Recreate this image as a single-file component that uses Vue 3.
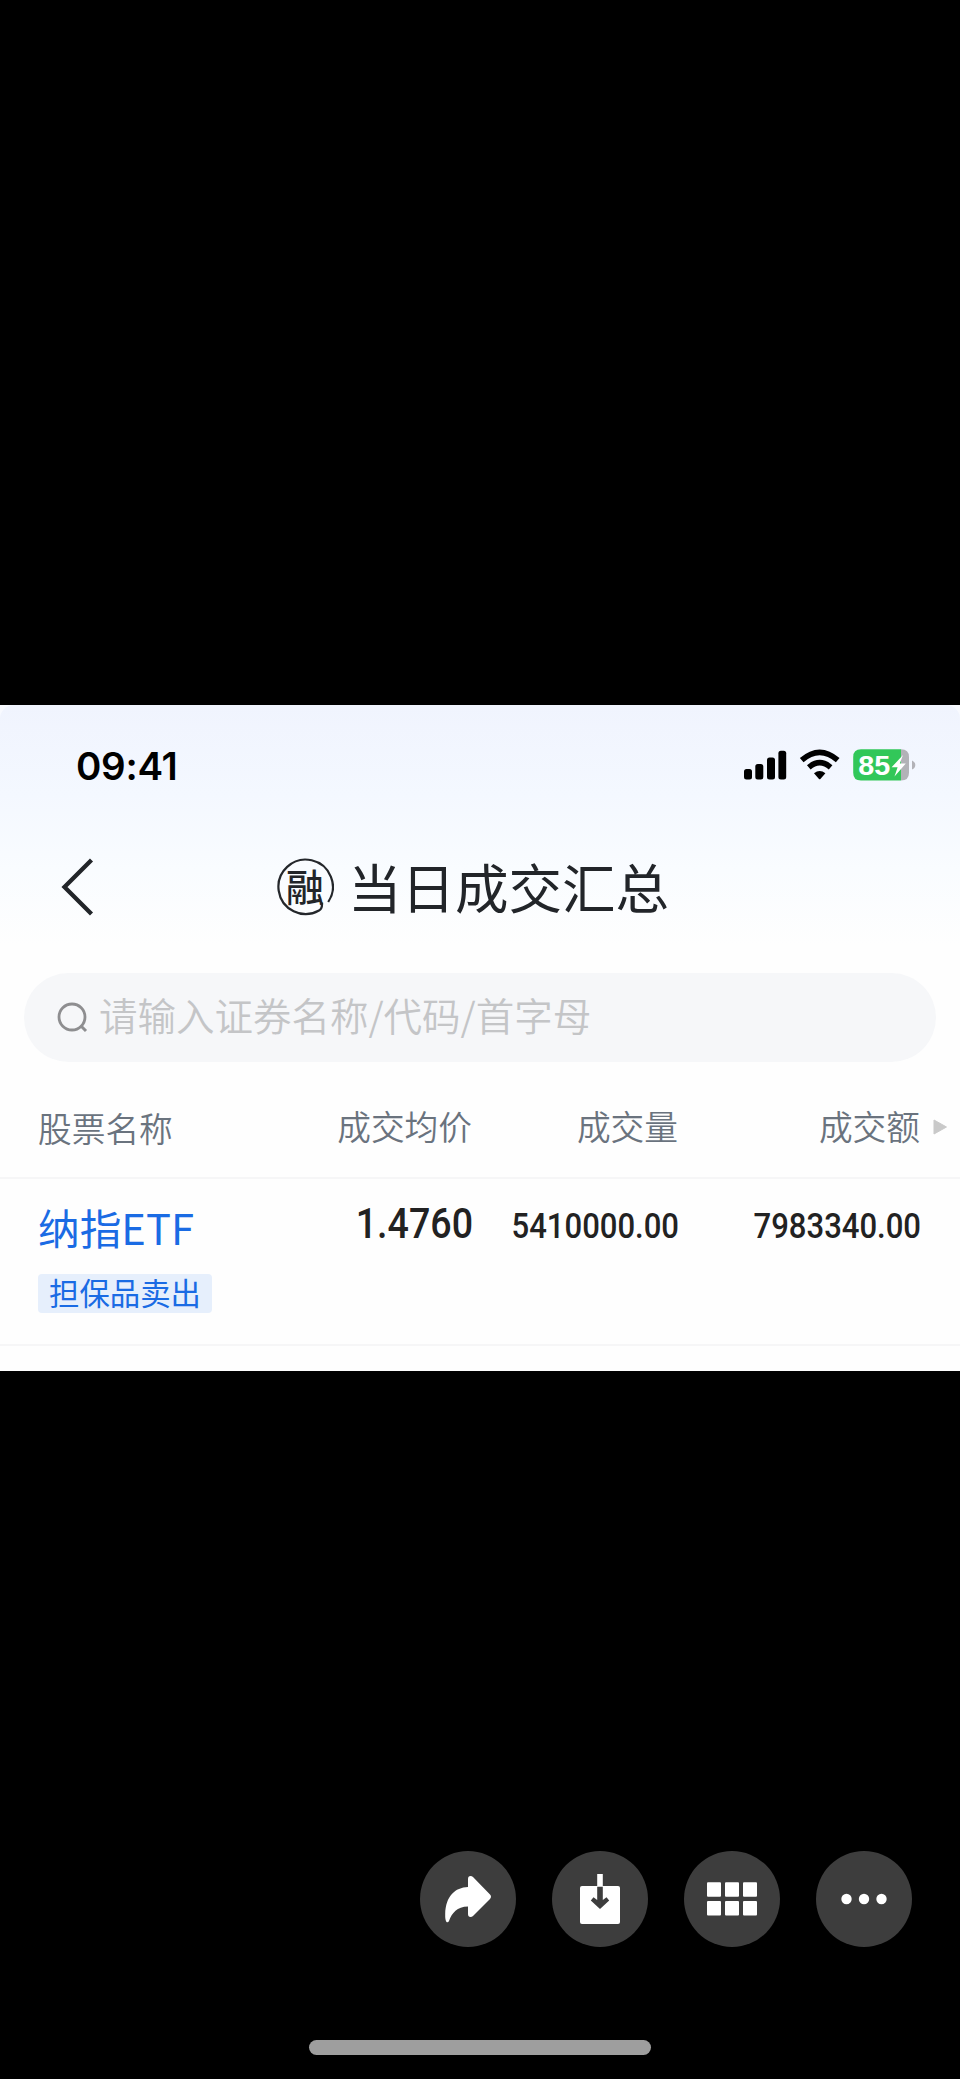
<script setup>
const columns = [
  { key: 'price', label: '成交均价' },
  { key: 'volume', label: '成交量' },
  { key: 'amount', label: '成交额' },
]
const row = {
  name: '纳指ETF',
  tag: '担保品卖出',
  price: '1.4760',
  volume: '5410000.00',
  amount: '7983340.00',
}
</script>

<template>
  <div class="viewer">
    <main class="shot">
      <div class="top">
        <div class="status">
          <span class="time">09:41</span>
          <svg class="status-icons" width="180" height="40" viewBox="20 15 180 40">
            <rect x="24" y="39" width="8" height="10.5" rx="2.5" />
            <rect x="35.3" y="34" width="8" height="15.5" rx="2.5" />
            <rect x="47" y="27.6" width="8" height="21.9" rx="2.5" />
            <rect x="58.4" y="20.8" width="7.8" height="28.7" rx="2.5" />
            <g fill="none" stroke="#000" stroke-width="5.6">
              <path d="M81.7 30.2 Q99.7 14.6 117.7 30.2" />
              <path d="M88.8 37.3 Q99.7 28.1 110.6 37.3" />
            </g>
            <path d="M94 43.3 Q99.7 38.6 105.4 43.3 L100.4 48.9 Q99.7 49.6 99 48.9Z" />
            <path d="M141 19.3H181V50.5H141Q133.2 50.5 133.2 42.7V27.1Q133.2 19.3 141 19.3Z" fill="#32c759" />
            <path d="M181 19.3Q189 19.3 189 27.1V42.7Q189 50.5 181 50.5Z" fill="#b2b2b7" />
            <path d="M192 30.5Q195.3 32 195.3 35T192 39.5Z" fill="#b2b2b7" />
            <text x="138.2" y="45.2" class="level" textLength="32" lengthAdjust="spacingAndGlyphs">85</text>
            <path d="M183 25L171.600 37.300H177.600L174.500 46.500L185.800 33.600H179.800Z" fill="#fff" />
          </svg>
        </div>
        <header class="nav">
          <svg class="back" width="36" height="64" viewBox="0 0 36 64">
            <path d="M31.5 5L4.5 32L31.5 59" fill="none" stroke="#222529" stroke-width="4.3" />
          </svg>
          <h1 class="title">
            <span class="seal">
              <svg width="58" height="58" viewBox="0 0 58 58">
                <path
                  d="M52.2 44A27.2 27.2 0 1 0 43 52.5Q46.500 50.500 46 44.500"
                  fill="none" stroke="#24272b" stroke-width="2.200"
                />
              </svg>
              <span class="seal-char">融</span>
            </span>
            <span class="title-text">当日成交汇总</span>
          </h1>
        </header>
      </div>

      <div class="search">
        <svg width="32" height="32" viewBox="0 0 32 32" fill="none" stroke="#8e8e90" stroke-width="2.8">
          <circle cx="15" cy="15" r="13" />
          <path d="M23.500 23.500L29 29" stroke-width="3" />
        </svg>
        <span class="placeholder">请输入证券名称/代码/首字母</span>
      </div>

      <div class="grid head">
        <span class="stock">股票名称</span>
        <span v-for="c in columns" :key="c.key" class="cell">{{ c.label }}</span>
        <svg class="more" width="14" height="18" viewBox="0 0 14 18">
          <path d="M1 2V16L13.5 9Z" fill="#c9c9c9" stroke="#c9c9c9" stroke-linejoin="round" />
        </svg>
      </div>

      <div class="grid row">
        <div class="stock">
          <div class="name">{{ row.name }}</div>
          <span class="tag">{{ row.tag }}</span>
        </div>
        <span v-for="c in columns" :key="c.key" class="cell num" :class="c.key">{{ row[c.key] }}</span>
      </div>
    </main>

    <div class="actions">
      <span class="action">
        <svg viewBox="0 0 96 96">
          <path
            d="M48 28Q48 25 50.5 25Q52 25 53 26L70 43.5Q72 45.7 70 48L53 65Q52 66 50.5 66Q48 66 48 63V55.500C37 55.500 32 62 29 70Q28 72 26.500 71Q25 69 25.200 63C25.800 45 35 36.500 48 36Z"
            fill="#fff"
          />
        </svg>
      </span>
      <span class="action">
        <svg viewBox="0 0 96 96">
          <rect x="28" y="35" width="40" height="38" rx="2" fill="#fff" />
          <path d="M45.2 23H50.8V35H45.2Z" fill="#fff" />
          <path d="M45.2 35.8H50.8V49L54.5 46.3L57.2 49.5L48 58L38.8 49.5L41.5 46.3L45.2 49Z" fill="#3d3d3d" />
        </svg>
      </span>
      <span class="action">
        <svg viewBox="0 0 96 96" fill="#fff">
          <template v-for="y in [31.2, 50]" :key="y">
            <rect v-for="x in [23, 41, 59]" :key="x" :x="x" :y="y" width="14" height="14.6" rx="1" />
          </template>
        </svg>
      </span>
      <span class="action">
        <svg viewBox="0 0 96 96" fill="#fff">
          <circle v-for="x in [30.5, 48, 65.5]" :key="x" :cx="x" cy="48" r="5.2" />
        </svg>
      </span>
    </div>
    <div class="home"></div>
  </div>
</template>

<style>
body { margin: 0; background: #000; }
</style>

<style scoped>
* { box-sizing: border-box; }
.viewer {
  width: 960px;
  height: 2079px;
  padding-top: 705px;
  background: #000;
  overflow: hidden;
  font-family: "Noto Sans CJK SC", sans-serif;
}
.shot { height: 666px; background: linear-gradient(#f8faff 0, #f8faff 30px, #fefefe 30px); overflow: hidden; }
.top {
  height: 268px;
  border-radius: 14px 14px 0 0;
  background: linear-gradient(#f0f4fe 0, #f4f8ff 90px, #f9fcff 165px, #fefefe 240px);
}
.status {
  height: 120px;
  display: flex;
  align-items: center;
  justify-content: space-between;
  padding: 0 40px 0 76px;
}
.time { padding-top: 2px; font: 600 38.5px/50px Inter, sans-serif; letter-spacing: -0.3px; }
.level { font: 700 27.5px "Liberation Sans", sans-serif; fill: #fff; }
.nav { display: flex; height: 124px; align-items: center; padding-left: 60px; }
.title {
  display: flex;
  align-items: center;
  margin: 0 0 0 180px;
  font-size: 53.5px;
  line-height: 72px;
  font-weight: 400;
  color: #222529;
}
.seal { position: relative; width: 58px; height: 58px; }
.seal svg { display: block; }
.seal-char {
  position: absolute;
  left: 10px;
  top: 6px;
  font-size: 38px;
  line-height: 42px;
  font-weight: 500;
}
.title-text { margin: -2px 0 0 14px; }
.search {
  display: flex;
  align-items: center;
  width: 912px;
  height: 89px;
  margin: 0 24px;
  padding-left: 33px;
  border-radius: 45px;
  background: #f6f7f9;
}
.placeholder {
  margin: -8px 0 0 10px;
  font-size: 38.5px;
  line-height: 60px;
  font-weight: 350;
  color: #c4c5c7;
  white-space: nowrap;
}
.grid {
  display: grid;
  grid-template-columns: 234px 200px 206px 242px 1fr;
  padding-left: 38px;
  border-bottom: 2px solid #f6f6f7;
}
.head {
  height: 117px;
  padding-top: 40px;
  font-size: 33.7px;
  line-height: 48px;
  font-weight: 350;
  color: #6a737e;
}
.head .stock { padding-top: 2px; }
.cell { text-align: right; white-space: nowrap; }
.more { margin: 16px 0 0 13px; }
.row { height: 167px; padding-top: 17px; }
.name { font-size: 41.7px; line-height: 62px; color: #1a6be4; white-space: nowrap; }
.tag {
  display: inline-block;
  height: 39px;
  margin-top: 16px;
  padding: 0 11px;
  border-radius: 4px;
  background: #e6effc;
  color: #1a6be4;
  font-size: 30.4px;
  line-height: 36px;
  white-space: nowrap;
}
.num {
  font-family: Roboto, sans-serif;
  font-weight: 500;
  color: #222;
  transform-origin: right center;
}
.price { font-size: 42px; line-height: 56px; transform: translateX(1px) scaleX(0.895); }
.volume, .amount { font-size: 34.5px; line-height: 61px; transform: translateX(1px) scaleX(0.9); }
.actions { display: flex; gap: 36px; margin: 480px 0 0 420px; }
.action { width: 96px; height: 96px; border-radius: 50%; background: #3d3d3d; }
.action svg { display: block; width: 96px; height: 96px; }
.home { width: 342px; height: 15px; margin: 93px auto 0; border-radius: 8px; background: #9e9e9e; }
</style>
